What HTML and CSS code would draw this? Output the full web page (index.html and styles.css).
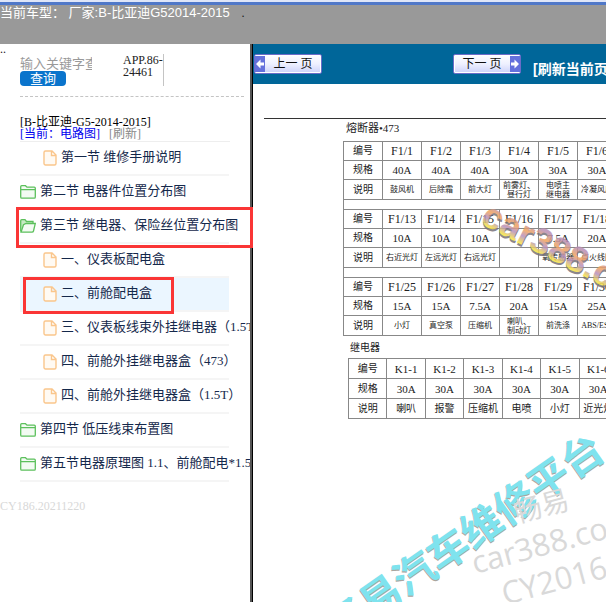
FILE: index.html
```html
<!DOCTYPE html>
<html lang="zh-CN">
<head>
<meta charset="utf-8">
<title>B-比亚迪G52014-2015</title>
<link rel="stylesheet" href="styles.css">
</head>
<body>
<header class="topbar">
  <p class="model">当前车型： 厂家:B-比亚迪G52014-2015 <span class="model-dot">.</span></p>
</header>
<div class="frames">
  <aside class="sidebar">
    <p class="dots">..</p>
    <div class="tools">
      <form class="search">
        <input class="search-box" type="text" placeholder="输入关键字查询" aria-label="输入关键字查询">
        <button class="search-btn" type="button">查询</button>
      </form>
      <p class="app">APP.86-<br>24461</p>
    </div>
    <div class="current">
      <p>[B-比亚迪-G5-2014-2015]</p>
      <p><a class="now" href="#">[当前：电路图]</a><a class="refresh" href="#">[刷新]</a></p>
    </div>
    <svg class="defs" aria-hidden="true">
      <symbol id="file" viewBox="0 0 14 16"><path d="M2.500 1H9l4 4v8.500a1.500 1.500 0 0 1-1.500 1.500h-9A1.500 1.500 0 0 1 1 13.500v-11A1.500 1.500 0 0 1 2.500 1zM8.500 1v4.500H13" fill="#fffaf3" stroke="#fac68c" stroke-width="1.400"/></symbol>
      <symbol id="folder" viewBox="0 0 16 14"><path d="M.7 12V1.700Q.7.700 1.700.700H5.500L7 2.200h7.300q1 0 1 1V12q0 1.200-1 1.200H1.700Q.7 13.200.7 12zM.7 4.700h14.600" fill="#f3fbf3" stroke="#5cc05c" stroke-width="1.300"/></symbol>
      <symbol id="folder-open" viewBox="0 0 16 14"><path d="M.7 12.500V1.700Q.7.700 1.700.700H5L6.500 2.500H13V5" fill="#c5eac2" stroke="#5cc05c" stroke-width="1.300"/><path d="M1 13.200L3.500 5.700 6 4.500h9.300L13.500 12q-.3 1.200-1.500 1.200z" fill="#f3fbf3" stroke="#5cc05c" stroke-width="1.300"/></symbol>
    </svg>
    <ul class="tree">
      <li class="node leaf"><svg class="file"><use href="#file"/></svg><a href="#">第一节 维修手册说明</a></li>
      <li class="node"><svg class="folder"><use href="#folder"/></svg><a href="#">第二节 电器件位置分布图</a></li>
      <li class="node"><svg class="folder"><use href="#folder-open"/></svg><a href="#">第三节 继电器、保险丝位置分布图</a><span class="mark mark-wide"></span></li>
      <li class="node leaf"><svg class="file"><use href="#file"/></svg><a href="#">一、仪表板配电盒</a></li>
      <li class="node leaf active"><svg class="file"><use href="#file"/></svg><a href="#">二、前舱配电盒</a><span class="mark mark-leaf"></span></li>
      <li class="node leaf"><svg class="file"><use href="#file"/></svg><a href="#">三、仪表板线束外挂继电器（1.5T</a></li>
      <li class="node leaf"><svg class="file"><use href="#file"/></svg><a href="#">四、前舱外挂继电器盒（473）</a></li>
      <li class="node leaf"><svg class="file"><use href="#file"/></svg><a href="#">四、前舱外挂继电器盒（1.5T）</a></li>
      <li class="node"><svg class="folder"><use href="#folder"/></svg><a href="#">第四节 低压线束布置图</a></li>
      <li class="node"><svg class="folder"><use href="#folder"/></svg><a href="#">第五节电器原理图 1.1、前舱配电*1.5</a></li>
    </ul>
    <p class="version">CY186.20211220</p>
  </aside>
  <main class="viewer">
    <nav class="pager">
      <button class="page-btn prev" type="button"><svg class="arrow" viewBox="0 0 10 16"><path d="M1 8l4.500-4.500V6.500H9v3H5.500v3z" fill="#fff"/></svg><span>上一 页</span></button>
      <button class="page-btn next" type="button"><span>下一 页</span><svg class="arrow" viewBox="0 0 10 16"><path d="M9 8L4.500 3.500V6.500H1v3h3.500v3z" fill="#fff"/></svg></button>
      <a class="reload" href="#">[刷新当前页</a>
    </nav>
    <section class="sheet">
      <h2 class="caption">熔断器•473</h2>
      <table class="fuses">
        <tr><th>编号</th><td>F1/1</td><td>F1/2</td><td>F1/3</td><td>F1/4</td><td>F1/5</td><td>F1/6</td></tr>
        <tr class="rating"><th>规格</th><td>40A</td><td>40A</td><td>40A</td><td>30A</td><td>30A</td><td>30A</td></tr>
        <tr class="note"><th>说明</th><td>鼓风机</td><td>后除霜</td><td>前大灯</td><td>前雾灯、<br>昼行灯</td><td>电喷主<br>继电器</td><td>冷凝风扇</td></tr>
        <tr class="gap"><td colspan="7"></td></tr>
        <tr><th>编号</th><td>F1/13</td><td>F1/14</td><td>F1/15</td><td>F1/16</td><td>F1/17</td><td>F1/18</td></tr>
        <tr class="rating"><th>规格</th><td>10A</td><td>10A</td><td>10A</td><td></td><td>7.5A</td><td>20A</td></tr>
        <tr class="note"><th>说明</th><td>右近光灯</td><td>左远光灯</td><td>右远光灯</td><td></td><td>氧传感器</td><td>点火线圈</td></tr>
        <tr class="gap"><td colspan="7"></td></tr>
        <tr><th>编号</th><td>F1/25</td><td>F1/26</td><td>F1/27</td><td>F1/28</td><td>F1/29</td><td>F1/30</td></tr>
        <tr class="rating"><th>规格</th><td>15A</td><td>15A</td><td>7.5A</td><td>20A</td><td>15A</td><td>25A</td></tr>
        <tr class="note"><th>说明</th><td>小灯</td><td>真空泵</td><td>压缩机</td><td>喇叭、<br>制动灯</td><td>前洗涤</td><td>ABS/ESP</td></tr>
      </table>
      <h2 class="caption relay-caption">继电器</h2>
      <table class="relays">
        <tr><th>编号</th><td>K1-1</td><td>K1-2</td><td>K1-3</td><td>K1-4</td><td>K1-5</td><td>K1-6</td></tr>
        <tr><th>规格</th><td>30A</td><td>30A</td><td>30A</td><td>30A</td><td>30A</td><td>30A</td></tr>
        <tr><th>说明</th><td>喇叭</td><td>报警</td><td>压缩机</td><td>电喷</td><td>小灯</td><td>近光灯</td></tr>
      </table>
      <svg class="watermark" viewBox="253 84 353 518">
        <defs>
          <linearGradient id="rainbow" x1="0" y1="0" x2="0" y2="1">
            <stop offset="0.250" stop-color="#b98fb4"/>
            <stop offset="0.450" stop-color="#f2a45c"/>
            <stop offset="0.600" stop-color="#b58fc0"/>
            <stop offset="0.780" stop-color="#f6e04a"/>
          </linearGradient>
        </defs>
        <g class="wm-rainbow" transform="translate(479 223) rotate(27)">
          <text class="shade" x="1" y="2">car388.c</text>
          <text fill="url(#rainbow)">car388.c</text>
        </g>
        <g class="wm-cyan" transform="translate(339 644) rotate(-35)">
          <text class="edge" x="-1" y="1">畅易汽车维修平台</text>
          <text>畅易汽车维修平台</text>
        </g>
        <g class="wm-grey">
          <text class="wm-cjk" transform="translate(517 523) rotate(-15)">畅易</text>
          <text transform="translate(475 574) rotate(-15)">car388.co</text>
          <text transform="translate(505 605) rotate(-15)">CY2016</text>
        </g>
      </svg>
    </section>
  </main>
</div>
</body>
</html>
```
FILE: styles.css
```css
* { box-sizing: border-box; }
body {
  margin: 0;
  height: 100vh;
  display: flex;
  flex-direction: column;
  overflow: hidden;
  background: #fff;
  color: #222;
  font: 12px/12px "Liberation Serif", "Noto Sans CJK SC", serif;
}
p, h2, ul { margin: 0; padding: 0; font-size: inherit; font-weight: normal; }
a { color: inherit; text-decoration: none; }
button, input { font-family: inherit; padding: 0; border: 0; }

.topbar {
  height: 44px;
  flex: none;
  background: #999;
  border-top: 2px solid #dfe6f8;
}
.model {
  border-top: 3px solid #5078c8;
  color: #fff;
  font: 13px/16px "Liberation Sans", "Noto Sans CJK SC", sans-serif;
  white-space: pre;
}
.model-dot { margin-left: 8px; color: #222; }

.frames { flex: 1; display: flex; min-height: 0; }
.sidebar { width: 250px; flex: none; white-space: nowrap; }
.dots { height: 10px; line-height: 10px; }
.tools {
  display: flex;
  margin: 0 6px 0 20px;
  padding-bottom: 10px;
  border-bottom: 1px dashed #c4c4c4;
}
.search { width: 103px; display: flex; flex-direction: column; align-items: flex-start; }
.search-box { width: 72px; height: 17px; padding-top: 3px; font-size: 13px; outline: 0; background: none; }
.search-box::placeholder { color: #999; }
.search-btn {
  width: 46px;
  height: 15px;
  border-radius: 4px;
  background: #0a74cc;
  color: #fff;
  font-size: 13px;
  line-height: 15px;
}
.app { width: 41px; border-right: 1px solid #c4c4c4; }
.current { margin: 19px 20px 0; padding-bottom: 1px; border-bottom: 1px solid #eee; color: #000; }
.now { color: #0000ee; }
.refresh { margin-left: 9px; color: #888; }

.defs { display: none; }
.tree { margin: 0 21px 0 20px; list-style: none; }
.node {
  position: relative;
  height: 34px;
  display: flex;
  align-items: center;
  gap: 4px;
  border-bottom: 2px solid #f5f5f5;
  color: #14284b;
  font-size: 13px;
}
.node a { padding-bottom: 2px; }
.leaf { padding-left: 23px; }
.active { background: #ebf6ff; }
.file { width: 14px; height: 16px; flex: none; }
.folder { width: 16px; height: 14px; flex: none; }
.mark { position: absolute; z-index: 2; border: 3px solid #fa3535; }
.mark-wide { inset: -3px -24px -6px -4px; }
.mark-leaf { inset: -1px 55px -4px 3px; }
.version { margin-top: 18px; color: #d8d8d8; }

.viewer {
  position: relative;
  z-index: 1;
  flex: 1;
  min-width: 0;
  display: flex;
  flex-direction: column;
  border-left: 1px solid #000;
  background: #fff;
  box-shadow: -2px 0 0 #555;
  margin-left: 2px;
}
.pager {
  height: 40px;
  flex: none;
  display: flex;
  align-items: center;
  padding-left: 1px;
  background: #069;
  white-space: nowrap;
  overflow: hidden;
}
.page-btn {
  width: 68px;
  height: 20px;
  flex: none;
  display: flex;
  align-items: center;
  border: 1px solid #6a6cc8;
  border-radius: 2px;
  background: linear-gradient(#fff, #eef0ff 50%, #ccd2fa);
  box-shadow: inset 0 0 0 1px #fff;
  color: #111;
  font-size: 12px;
  line-height: 16px;
}
.page-btn span { flex: 1; text-align: center; }
.arrow { width: 10px; height: 16px; background: #6470dc; }
.next { margin-left: 131px; }
.reload { margin: 10px 0 0 12px; color: #fff; font: bold 14px/16px "Liberation Sans", "Noto Sans CJK SC", sans-serif; }

.sheet {
  position: relative;
  flex: 1;
  min-height: 0;
  overflow: hidden;
  padding: 34px 0 0 11px;
}
.caption {
  border-top: 1px solid #333;
  padding: 2px 0 0 82px;
  height: 23px;
  line-height: 14px;
  font-size: 11px;
}
.relay-caption { border: 0; padding: 5px 0 0 86px; height: 22px; font-size: 10px; }
table { border-collapse: collapse; table-layout: fixed; text-align: center; margin-left: 79px; }
.fuses { width: 274px; }
.relays { width: 270px; margin-left: 84px; }
th, td { padding: 0; border: 1px solid #888; line-height: 12px; }
th { font-size: 10px; font-weight: normal; }
.fuses tr { height: 19px; }
.fuses .note { height: 20px; }
.rating td, .relays td { font-size: 11px; }
.note td { font-size: 8px; line-height: 9px; white-space: nowrap; }
.fuses .gap { height: 10px; }
.gap td { line-height: 0; }
.relays tr { height: 20px; }
.relays tr:last-child td { font-size: 10px; }

.watermark { position: absolute; top: 0; left: 0; width: 353px; height: 518px; }
.wm-rainbow { font: bold 36px "Liberation Sans", sans-serif; opacity: 0.850; }
.wm-rainbow .shade { fill: #77727a; }
.wm-grey { font: 31px "Open Sans", sans-serif; fill: #d9d9d9; }
.wm-cjk { font: 28px "Noto Sans CJK SC", sans-serif; }
.wm-cyan { font: bold 41px "Noto Sans CJK SC", sans-serif; fill: #7fe3ee; }
.wm-cyan .edge { fill: #aaa69f; }
```
